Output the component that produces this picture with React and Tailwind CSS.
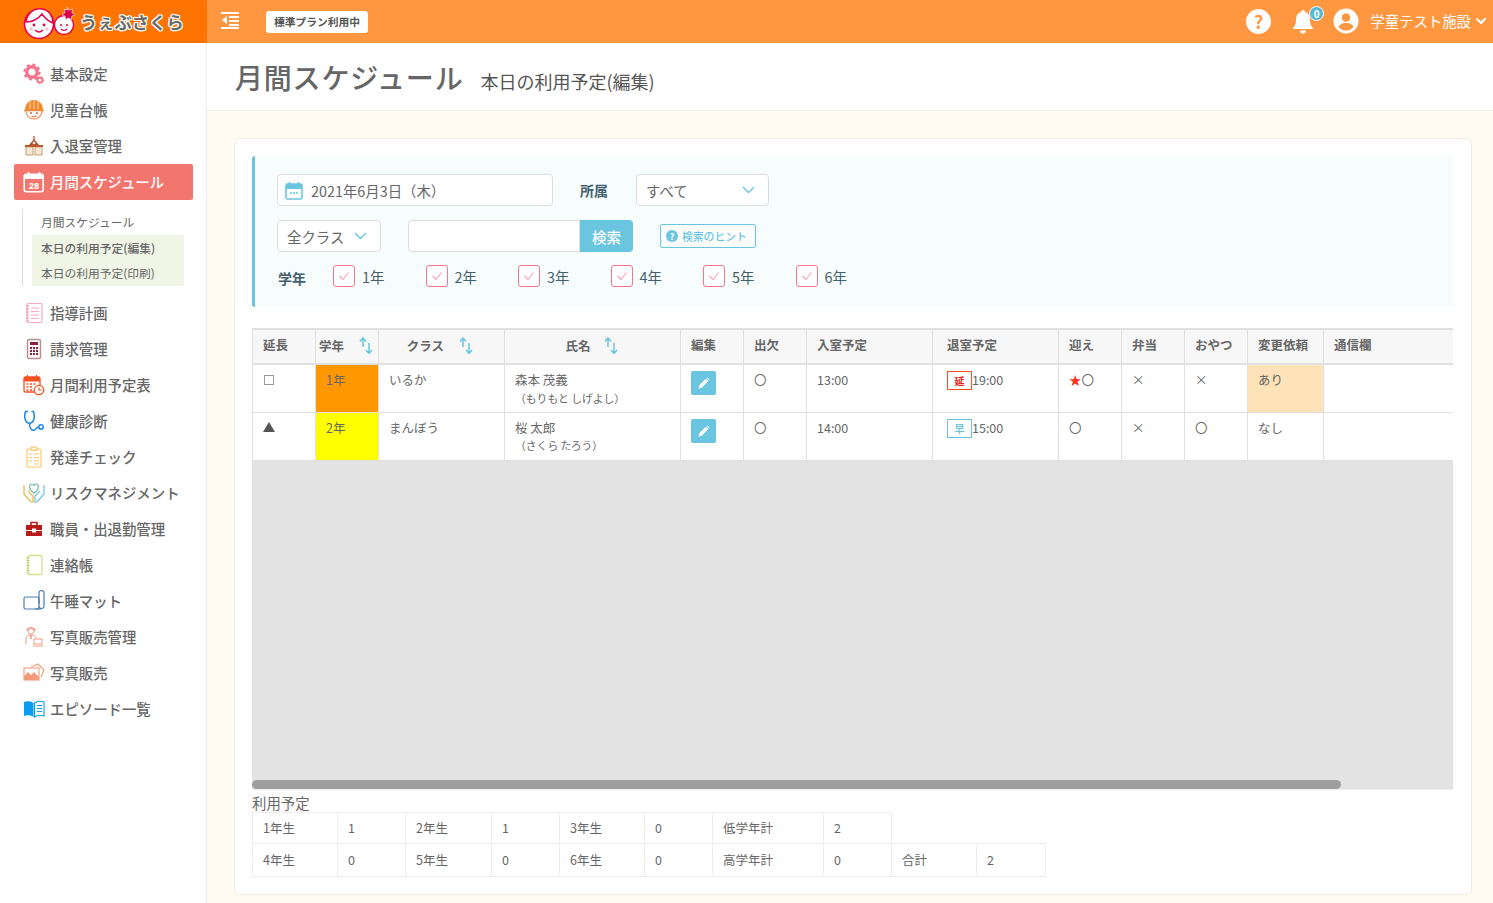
import React from "react";

const Logo = () => (
  <svg width="56" height="34" viewBox="0 0 56 34" className="shrink-0">
    <ellipse cx="17" cy="19" rx="14.5" ry="14.5" fill="#fff" stroke="#e6004c" strokeWidth="1.6" />
    <path d="M4 17 C6 6 14 3 20 4 C27 5 31 11 31 18 C26 16 22 12 20 9 C16 14 10 17 4 17Z" fill="#fff" stroke="#e6004c" strokeWidth="1.4" />
    <circle cx="12" cy="20" r="1.4" fill="#e6004c" /><circle cx="22" cy="20" r="1.4" fill="#e6004c" />
    <path d="M13 25 q4 4 8 0" fill="none" stroke="#e6004c" strokeWidth="1.3" />
    <circle cx="9" cy="24" r="1.8" fill="#ffc0cb" /><circle cx="25" cy="24" r="1.8" fill="#ffc0cb" />
    <circle cx="42" cy="20" r="9.5" fill="#fff" stroke="#e6004c" strokeWidth="1.4" />
    <circle cx="39" cy="20" r="1" fill="#e6004c" /><circle cx="45" cy="20" r="1" fill="#e6004c" />
    <path d="M39 24 q3 3 6 0" fill="none" stroke="#e6004c" strokeWidth="1.1" />
    <path d="M45 2 l2 3 3.5-.8 -.6 3.5 3 2 -3.2 1.6 -.2 3.4 -3-1.8 -3 1.8 -.3-3.4 -3.2-1.6 3-2 -.6-3.5 3.4.8Z" fill="#d6004c" stroke="#fff" strokeWidth=".6" />
  </svg>
);

const Gear = () => (
  <svg width="22" height="22" viewBox="0 0 22 22">
    <circle cx="9" cy="9" r="5.2" fill="none" stroke="#f4738a" strokeWidth="3.4" />
    <circle cx="9" cy="9" r="7.6" fill="none" stroke="#f4738a" strokeWidth="2" strokeDasharray="3 3" />
    <circle cx="17" cy="17" r="2.4" fill="none" stroke="#f4738a" strokeWidth="1.8" />
    <circle cx="17" cy="17" r="3.8" fill="none" stroke="#f4738a" strokeWidth="1" strokeDasharray="1.5 1.5" />
  </svg>
);
const Child = () => (
  <svg width="22" height="22" viewBox="0 0 22 22">
    <circle cx="11" cy="12" r="8" fill="#fff" stroke="#f08a4b" strokeWidth="1.2" />
    <path d="M2 11 C2 4 7 1 11 1 C15 1 20 4 20 11Z" fill="#f08a2b" />
    <path d="M7 2.5 V10 M11 1.5 V10 M15 2.5 V10" stroke="#fff" strokeWidth=".6" />
    <path d="M1 11.5 H21" stroke="#f08a4b" strokeWidth="1.5" />
    <circle cx="8" cy="14" r="1" fill="#d9633a" /><circle cx="14" cy="14" r="1" fill="#d9633a" />
    <path d="M8.5 17 q2.5 2 5 0" fill="none" stroke="#d9633a" strokeWidth="1" />
  </svg>
);
const School = () => (
  <svg width="22" height="22" viewBox="0 0 22 22">
    <path d="M11 1 v4" stroke="#c9452b" strokeWidth="1.2" />
    <path d="M11 4 L16 10 H20 V12 H2 V10 H6Z" fill="#b5522d" />
    <rect x="3" y="12" width="7" height="8" fill="#f4e9d4" stroke="#c08a55" strokeWidth=".8" />
    <rect x="12" y="12" width="7" height="8" fill="#f4e9d4" stroke="#c08a55" strokeWidth=".8" />
    <circle cx="11" cy="8" r="1.3" fill="#fff" />
  </svg>
);
const Cal28 = () => (
  <svg width="22" height="22" viewBox="0 0 22 22">
    <rect x="1.2" y="3.2" width="19" height="17.6" rx="2.2" fill="none" stroke="#fff" strokeWidth="1.6" />
    <rect x="1" y="3" width="20" height="5" rx="2" fill="#fff" />
    <rect x="4.5" y="1" width="2" height="4" rx="1" fill="#fff" /><rect x="15.5" y="1" width="2" height="4" rx="1" fill="#fff" />
    <text x="11" y="17.5" fontSize="9" fontWeight="700" textAnchor="middle" fill="#fff" fontFamily="'Noto Sans'">28</text>
  </svg>
);
const Notebook = () => (
  <svg width="20" height="22" viewBox="0 0 20 22">
    <rect x="3" y="1.5" width="15" height="19" rx="1.5" fill="#fff" stroke="#f9a8c4" strokeWidth="1.2" />
    <path d="M2 4 h3 M2 7 h3 M2 10 h3 M2 13 h3 M2 16 h3 M2 19 h3" stroke="#f48fb1" strokeWidth="1" />
    <path d="M7 6 h8 M7 9.5 h8 M7 13 h8 M7 16.5 h8" stroke="#f9a8c4" strokeWidth="1" />
  </svg>
);
const Calc = () => (
  <svg width="20" height="22" viewBox="0 0 20 22">
    <rect x="3.5" y="1.5" width="13" height="19" rx="1.5" fill="#fff" stroke="#b98d8d" strokeWidth="1.4" />
    <rect x="6" y="4" width="8" height="3" fill="#8d1f3f" />
    <path d="M6 10 h2 M9 10 h2 M12 10 h2 M6 13 h2 M9 13 h2 M12 13 h2 M6 16 h2 M9 16 h2 M12 16 h2" stroke="#8d1f3f" strokeWidth="1.8" />
  </svg>
);
const CalClock = () => (
  <svg width="22" height="22" viewBox="0 0 22 22">
    <rect x="1" y="3" width="16" height="15" rx="1.5" fill="#fff" stroke="#f4511e" strokeWidth="1.3" />
    <rect x="1" y="3" width="16" height="4.5" fill="#f4511e" />
    <path d="M4.5 1 v4 M13.5 1 v4" stroke="#f4511e" strokeWidth="1.3" />
    <path d="M3.5 10 h2 M7 10 h2 M10.5 10 h2 M3.5 13 h2 M7 13 h2 M3.5 16 h2 M7 16 h2" stroke="#f4511e" strokeWidth="1.6" />
    <circle cx="16" cy="16" r="4.7" fill="#fff" stroke="#f4511e" strokeWidth="1.3" />
    <path d="M16 13.5 V16 H18.5" fill="none" stroke="#f4511e" strokeWidth="1.1" />
  </svg>
);
const Steth = () => (
  <svg width="22" height="22" viewBox="0 0 22 22" fill="none" stroke="#1e88e5" strokeWidth="1.5">
    <path d="M5 1.5 H2.5 C1 7 1.5 12 6.5 13.5 C11.5 12 12 7 10.5 1.5 H8.5" />
    <path d="M6.5 13.5 C6.5 19 9 21 11.5 20 C14 19 13.5 17 15.5 17" />
    <circle cx="18" cy="17" r="2.2" />
  </svg>
);
const Clip = () => (
  <svg width="20" height="22" viewBox="0 0 20 22" fill="none" stroke="#fcc462" strokeWidth="1.1">
    <rect x="3" y="3" width="14" height="18" rx="1" fill="#fff" />
    <rect x="7" y="1" width="6" height="3.5" rx="1" fill="#fff3d6" />
    <path d="M10 8 h5 M10 11.5 h5 M10 15 h5 M10 18 h5 M5 8 h3 M5 11.5 h3 M5 15 h3" strokeWidth="1.2" />
  </svg>
);
const Hands = () => (
  <svg width="22" height="22" viewBox="0 0 22 22" fill="none" strokeWidth="1.2">
    <path d="M11 11 C5 7 6 2 9 2 C10 2 11 3 11 4 C11 3 12 2 13 2 C16 2 17 7 11 11Z" stroke="#6bb9a8" />
    <path d="M1 3 V12 L8 20 H10 V14 L5 9" stroke="#e6b84d" />
    <path d="M21 3 V12 L14 20 H12 V14 L17 9" stroke="#6cc1dc" />
  </svg>
);
const Case = () => (
  <svg width="20" height="22" viewBox="0 0 20 22">
    <path d="M7 7 V4.5 H13 V7" fill="none" stroke="#b71c1c" strokeWidth="1.6" />
    <rect x="2" y="7" width="16" height="5" fill="#b71c1c" />
    <rect x="2" y="13" width="16" height="5" fill="#b71c1c" />
    <rect x="8" y="10.5" width="4" height="4" fill="#fff" />
  </svg>
);
const Spiral = () => (
  <svg width="20" height="22" viewBox="0 0 20 22">
    <rect x="4" y="1.5" width="14" height="19" rx="1.5" fill="#fff" stroke="#d4e08a" strokeWidth="1.3" />
    <path d="M2.5 4 h3 M2.5 6.5 h3 M2.5 9 h3 M2.5 11.5 h3 M2.5 14 h3 M2.5 16.5 h3 M2.5 19 h3" stroke="#b8c46a" strokeWidth=".9" />
  </svg>
);
const Mat = () => (
  <svg width="22" height="22" viewBox="0 0 22 22" fill="none" stroke="#4a7fb5" strokeWidth="1.2">
    <rect x="1" y="7" width="15" height="12" rx="1.5" />
    <path d="M16 14 V3 a2.5 2.5 0 0 1 5 0 V16 a2.5 2.5 0 0 1 -5 0" />
    <path d="M12 19 h6" />
  </svg>
);
const Seller = () => (
  <svg width="22" height="22" viewBox="0 0 22 22" fill="none" stroke="#f29a85" strokeWidth="1">
    <circle cx="8" cy="5" r="3" />
    <path d="M4 5 C4 1 12 1 12 5" strokeWidth="1.4" />
    <path d="M3 18 V12 C3 10 5 9 8 9 C11 9 13 10 13 12" />
    <path d="M8 9 V13" strokeWidth="1.6" />
    <rect x="11" y="13" width="8" height="5" /><path d="M10 20 H20" />
  </svg>
);
const Photos = () => (
  <svg width="22" height="22" viewBox="0 0 22 22" fill="none" stroke="#f29a7a" strokeWidth="1.1">
    <path d="M8 5 L15 2 L21 8 L18 15" />
    <rect x="1" y="6" width="15" height="12" fill="#fff" />
    <path d="M1 18 V14 L5 10 L8 13 L11 10 L16 15 V18Z" fill="#f29a7a" stroke="none" />
  </svg>
);
const Book = () => (
  <svg width="22" height="22" viewBox="0 0 22 22">
    <path d="M1 4 C4 3 8 3 10.5 5 V19 C8 17 4 17 1 18Z" fill="#0a9cf0" />
    <path d="M21 4 C18 3 14 3 11.5 5 V19 C14 17 18 17 21 18Z" fill="#fff" stroke="#0a9cf0" strokeWidth="1.1" />
    <path d="M14 7.5 h5 M14 10.5 h5 M14 13.5 h5" stroke="#0a9cf0" strokeWidth="1.1" />
  </svg>
);

const Item = ({ icon, label, active }) => (
  <a className={`flex items-center h-9 pl-[9px] gap-[5px] rounded-[2px] text-[14.4px] font-medium ${active ? "bg-[#f3766e] text-white" : "text-[#666]"}`}>
    <span className="w-[22px] h-[22px] flex items-center justify-center shrink-0">{icon}</span>
    <span>{label}</span>
  </a>
);

const upper = [
  [<Gear />, "基本設定"],
  [<Child />, "児童台帳"],
  [<School />, "入退室管理"],
];
const lower = [
  [<Notebook />, "指導計画"],
  [<Calc />, "請求管理"],
  [<CalClock />, "月間利用予定表"],
  [<Steth />, "健康診断"],
  [<Clip />, "発達チェック"],
  [<Hands />, "リスクマネジメント"],
  [<Case />, "職員・出退勤管理"],
  [<Spiral />, "連絡帳"],
  [<Mat />, "午睡マット"],
  [<Seller />, "写真販売管理"],
  [<Photos />, "写真販売"],
  [<Book />, "エピソード一覧"],
];

const Sidebar = () => (
  <aside className="w-[207px] shrink-0 bg-white border-r border-[#eeeeee] pt-[13px] pl-[14px] pr-[13px]">
    {upper.map(([i, l]) => <Item key={l} icon={i} label={l} />)}
    <Item icon={<Cal28 />} label="月間スケジュール" active />
    <div className="ml-2 mt-[9px] mb-[9px] border-l border-[#dddddd] pl-[9px] pr-[9px] text-[11.75px] text-[#666]">
      <div className="h-[26px] flex items-center pl-[9px] pb-[1px]">月間スケジュール</div>
      <div className="h-[26px] flex items-center pl-[9px] bg-[#f0f5e6] font-medium">本日の利用予定(編集)</div>
      <div className="h-[25px] flex items-center pl-[9px] pb-[1px] bg-[#f0f5e6]">本日の利用予定(印刷)</div>
    </div>
    {lower.map(([i, l]) => <Item key={l} icon={i} label={l} />)}
  </aside>
);

const Header = () => (
  <header className="h-[43px] flex bg-[#ff9640] text-white shrink-0">
    <div className="w-[207px] bg-[#ff7300] flex items-center pl-[22px] gap-[2px] shrink-0">
      <Logo />
      <span className="text-[17.3px] font-bold text-[#6b6b6b] [text-shadow:1px_0_0_#fff,-1px_0_0_#fff,0_1px_0_#fff,0_-1px_0_#fff,1px_1px_0_#fff,-1px_-1px_0_#fff,1px_-1px_0_#fff,-1px_1px_0_#fff]">うぇぶさくら</span>
    </div>
    <div className="flex-1 flex items-center">
      <svg width="20" height="18" viewBox="0 0 20 18" className="ml-[13px] mb-[4px]" fill="#fff">
        <rect x="1" y="1" width="18" height="2" /><rect x="9" y="5" width="10" height="2" /><rect x="9" y="9" width="10" height="2" /><rect x="9" y="13" width="10" height="2" /><rect x="1" y="16" width="18" height="2" />
        <path d="M7 5 V13 L2 9Z" />
      </svg>
      <span className="ml-[26px] h-[22px] w-[102px] rounded-[3px] bg-white text-[#555] text-[10.75px] font-bold flex items-center justify-center pt-[1px]">標準プラン利用中</span>
    </div>
    <div className="flex items-center pr-[6px] pb-[1px]">
      <span className="w-[25px] h-[25px] rounded-full bg-white text-[#ff9640] font-bold text-[18px] leading-none flex items-center justify-center">?</span>
      <div className="relative ml-[20px] w-[24px] h-[26px] flex items-center justify-center">
        <svg width="22" height="25" viewBox="0 0 22 25" fill="#fff">
          <path d="M11 1 a2 2 0 0 1 2 2 C17 4 18 8 18 11 C18 15 19 17 21 19 V20 H1 V19 C3 17 4 15 4 11 C4 8 5 4 9 3 A2 2 0 0 1 11 1Z" />
          <path d="M8 21.5 h6 a3 3 0 0 1 -6 0Z" />
        </svg>
        <span className="absolute -top-[2px] -right-[9px] w-[15px] h-[15px] rounded-full bg-[#5ab7d4] border border-white text-white text-[10px] font-bold leading-none flex items-center justify-center">0</span>
      </div>
      <svg width="26" height="26" viewBox="0 0 26 26" className="ml-[18px]">
        <circle cx="13" cy="13" r="12.5" fill="#fff" />
        <circle cx="13" cy="9.5" r="4.2" fill="#ff9640" />
        <path d="M5.5 19 C7 15.5 10 15 13 15 C16 15 19 15.5 20.5 19 C18 22 15 22.5 13 22.5 C11 22.5 8 22 5.5 19Z" fill="#ff9640" />
      </svg>
      <span className="ml-[11px] text-[14.4px]">学童テスト施設</span>
      <svg width="12" height="8" viewBox="0 0 12 8" className="ml-[4px]" fill="none" stroke="#fff" strokeWidth="2"><path d="M1.5 1.5 L6 6 L10.5 1.5" /></svg>
    </div>
  </header>
);

const Chevron = () => (
  <svg width="13" height="8" viewBox="0 0 13 8" fill="none" stroke="#6ac5e0" strokeWidth="1.4"><path d="M1 1 L6.5 6.5 L12 1" /></svg>
);

const Check = ({ label }) => (
  <div className="w-[92.5px] flex items-center shrink-0">
    <span className="w-[22px] h-[22px] rounded-[3px] border border-[#f7748f] bg-white flex items-center justify-center">
      <svg width="12" height="10" viewBox="0 0 12 10" fill="none" stroke="#f7a0b2" strokeWidth="1.1"><path d="M1.5 5 L5 8.5 L10.5 1.5" /></svg>
    </span>
    <span className="ml-[7px] pt-[1px] text-[14.4px] text-[#44606e]">{label}</span>
  </div>
);

const Filters = () => (
  <section className="bg-[#f7fdfd] border-l-[3px] border-[#6ac5e0] rounded-l-[3px] h-[151px] pt-[18px] pl-[22px]">
    <div className="flex items-center h-8">
      <div className="w-[276px] h-8 border border-[#dddddd] rounded-[4px] bg-white flex items-center pl-[7px] text-[14.4px] text-[#666]">
        <svg width="18" height="19" viewBox="0 0 18 19">
          <rect x="1" y="3" width="16" height="15" rx="1.5" fill="#fff" stroke="#6ac5e0" strokeWidth="1.6" />
          <rect x="1" y="3" width="16" height="5" fill="#6ac5e0" />
          <path d="M4.5 1 v4 M13.5 1 v4" stroke="#6ac5e0" strokeWidth="1.6" />
          <path d="M5 12 h2 M8 12 h2 M11 12 h2" stroke="#6ac5e0" strokeWidth="1.6" />
        </svg>
        <span className="ml-[8px] pt-[1px]">2021年6月3日（木）</span>
      </div>
      <span className="ml-[27px] text-sm font-bold text-[#44606e]">所属</span>
      <div className="ml-[28px] w-[133px] h-8 border border-[#dddddd] rounded-[4px] bg-white flex items-center justify-between pl-[9px] pr-[13px] text-[14.4px] text-[#666]">
        <span className="pt-[1px]">すべて</span><Chevron />
      </div>
    </div>
    <div className="flex items-center h-8 mt-[14px]">
      <div className="w-[104px] h-8 border border-[#dddddd] rounded-[4px] bg-white flex items-center justify-between pl-[9px] pr-[13px] text-[14.4px] text-[#666]">
        <span className="pt-[1px]">全クラス</span><Chevron />
      </div>
      <div className="ml-[27px] w-[172px] h-8 border border-[#dddddd] rounded-l-[4px] bg-white" />
      <button className="w-[53px] h-8 pt-[1px] bg-[#6ac5e0] rounded-r-[4px] text-white text-[14.4px] font-medium">検索</button>
      <div className="ml-[27px] w-[96px] h-6 border border-[#6ac5e0] rounded-[2px] bg-white flex items-center pl-[5px] gap-[4px] text-[10.8px] font-medium text-[#6ac5e0]">
        <span className="w-[12px] h-[12px] rounded-full bg-[#6ac5e0] text-white text-[9px] font-bold leading-none flex items-center justify-center">?</span>
        検索のヒント
      </div>
    </div>
    <div className="flex items-center mt-[13px] h-[22px]">
      <span className="w-[56px] text-sm font-bold text-[#44606e] pt-[4px] pl-[1px]">学年</span>
      {["1年", "2年", "3年", "4年", "5年", "6年"].map((l) => <Check key={l} label={l} />)}
    </div>
  </section>
);

const Sort = () => (
  <svg width="14" height="17" viewBox="0 0 14 17" fill="none" stroke="#6ac5e0" strokeWidth="1.5" className="shrink-0 -mt-[2px]">
    <path d="M4 10 V1.5 M1 4.5 L4 1 L7 4.5" />
    <path d="M10 6 V16 M7 13 L10 16.5 L13 13" />
  </svg>
);

const Pencil = () => (
  <span className="w-[25px] h-[24px] rounded-[2px] bg-[#6ac5e0] flex items-center justify-center">
    <svg width="12" height="12" viewBox="0 0 12 12" fill="#fff"><path d="M0.5 11.5 L1.3 8.3 L7.8 1.8 L10.2 4.2 L3.7 10.7Z M8.6 1 L9.4 0.5 L11.5 2.6 L11 3.4Z" /></svg>
  </span>
);

const Th = ({ children, className = "" }) => (
  <th className={`border border-[#e0e0e0] border-b-2 border-t-2 bg-[#f7f7f7] font-bold text-[12.5px] text-[#666] h-[35px] p-0 text-left ${className}`}>{children}</th>
);
const Td = ({ children, className = "" }) => (
  <td className={`border border-[#e0e0e0] align-top text-[12.5px] text-[#666] pt-[6px] px-[10px] ${className}`}>{children}</td>
);

const Schedule = () => (
  <div className="mt-[21px] w-[1201px] h-[462px] bg-[#e3e3e3] flex flex-col justify-between overflow-hidden border-b border-[#eeeeee]">
    <table className="table-fixed border-collapse bg-white w-[1201px]">
      <colgroup>
        <col className="w-[63px]" /><col className="w-[63px]" /><col className="w-[126px]" /><col className="w-[176px]" />
        <col className="w-[63px]" /><col className="w-[63px]" /><col className="w-[126px]" /><col className="w-[126px]" />
        <col className="w-[63px]" /><col className="w-[63px]" /><col className="w-[63px]" /><col className="w-[76px]" /><col />
      </colgroup>
      <thead>
        <tr>
          <Th className="pl-[10px] pb-[2px]">延長</Th>
          <Th><div className="flex items-center pl-[3px] pr-[5px] justify-between"><span>学年</span><Sort /></div></Th>
          <Th><div className="flex items-center justify-center gap-[15px] pl-[6px] pr-[9px]"><span>クラス</span><Sort /></div></Th>
          <Th><div className="flex items-center justify-center gap-[13px] pr-[2px]"><span>氏名</span><Sort /></div></Th>
          <Th className="pl-[10px] pb-[2px]">編集</Th>
          <Th className="pl-[10px] pb-[2px]">出欠</Th>
          <Th className="pl-[10px] pb-[2px]">入室予定</Th>
          <Th className="pl-[14px] pb-[2px]">退室予定</Th>
          <Th className="pl-[10px] pb-[2px]">迎え</Th>
          <Th className="pl-[10px] pb-[2px]">弁当</Th>
          <Th className="pl-[10px] pb-[2px]">おやつ</Th>
          <Th className="pl-[10px] pb-[2px]">変更依頼</Th>
          <Th className="pl-[10px] pb-[2px] border-r-0">通信欄</Th>
        </tr>
      </thead>
      <tbody>
        <tr className="h-[48px]">
          <Td><span className="block ml-[1px] mt-[4px] w-[10px] h-[10px] border border-[#999]" /></Td>
          <Td className="bg-[#ff9800]">1年</Td>
          <Td>いるか</Td>
          <Td>
            <div>森本 茂義</div>
            <div className="text-[10.8px] leading-[14px] mt-[1px]">（もりもと しげよし）</div>
          </Td>
          <Td><Pencil /></Td>
          <Td>〇</Td>
          <Td>13:00</Td>
          <Td className="pl-[14px]"><div className="flex items-start"><span className="w-[25px] h-[19px] border border-[#f4511e] text-[#f02020] text-[10px] font-bold flex items-center justify-center">延</span>19:00</div></Td>
          <Td><span className="text-[#f4321e]">★</span>〇</Td>
          <Td>×</Td>
          <Td>×</Td>
          <Td className="bg-[#ffe3b8]">あり</Td>
          <Td className="border-r-0" />
        </tr>
        <tr className="h-[48px]">
          <Td className="text-sm leading-[16px]"><svg width="12" height="10" viewBox="0 0 12 10" className="mt-[3px]" fill="#555"><path d="M6 0 L12 10 H0Z" /></svg></Td>
          <Td className="bg-[#ffff00]">2年</Td>
          <Td>まんぼう</Td>
          <Td>
            <div>桜 太郎</div>
            <div className="text-[10.8px] leading-[14px] mt-[1px]">（さくら たろう）</div>
          </Td>
          <Td><Pencil /></Td>
          <Td>〇</Td>
          <Td>14:00</Td>
          <Td className="pl-[14px]"><div className="flex items-start"><span className="w-[25px] h-[19px] border border-[#6ac5e0] text-[#6ac5e0] text-[10px] font-bold flex items-center justify-center">早</span>15:00</div></Td>
          <Td>〇</Td>
          <Td>×</Td>
          <Td>〇</Td>
          <Td>なし</Td>
          <Td className="border-r-0" />
        </tr>
      </tbody>
    </table>
    <div className="w-[1089px] h-[9px] rounded-[5px] bg-[#9e9e9e]" />
  </div>
);

const S = ({ children }) => (
  <td className="border border-[#eeeeee] p-0 pl-[10px] text-[12.5px] text-[#666]">{children}</td>
);

const Summary = () => (
  <div>
    <div className="text-[14.4px] leading-[19px] text-[#666] mt-[3px]">利用予定</div>
    <table className="table-fixed border-collapse w-[793px]">
      <colgroup>
        <col className="w-[85px]" /><col className="w-[68px]" /><col className="w-[86px]" /><col className="w-[68px]" />
        <col className="w-[85px]" /><col className="w-[68px]" /><col className="w-[111px]" /><col className="w-[68px]" />
        <col className="w-[85px]" /><col className="w-[69px]" />
      </colgroup>
      <tbody>
        <tr className="h-[31px]">
          <S>1年生</S><S>1</S><S>2年生</S><S>1</S><S>3年生</S><S>0</S><S>低学年計</S><S>2</S>
        </tr>
        <tr className="h-[33px]">
          <S>4年生</S><S>0</S><S>5年生</S><S>0</S><S>6年生</S><S>0</S><S>高学年計</S><S>0</S><S>合計</S><S>2</S>
        </tr>
      </tbody>
    </table>
  </div>
);

export default function App() {
  return (
    <div className="h-screen overflow-hidden flex flex-col bg-white [font-family:'Noto_Sans_CJK_JP','Noto_Sans',sans-serif]">
      <Header />
      <div className="flex flex-1 min-h-0">
        <Sidebar />
        <main className="flex-1 bg-[#fffbf2]">
          <div className="h-[68px] bg-white border-b border-[#eeeeee] flex items-center pl-[28px] pt-[1px]">
            <h1 className="text-[28px] font-medium text-[#666] tracking-[0.8px]">月間スケジュール</h1>
            <span className="ml-[17px] mt-[7px] text-lg text-[#555]">本日の利用予定(編集)</span>
          </div>
          <div className="ml-[27px] mt-[27px] w-[1238px] h-[757px] bg-white border border-[#f0ece4] rounded-[6px] pt-[17px] pl-[17px] pr-[18px]">
            <Filters />
            <Schedule />
            <Summary />
          </div>
        </main>
      </div>
    </div>
  );
}
